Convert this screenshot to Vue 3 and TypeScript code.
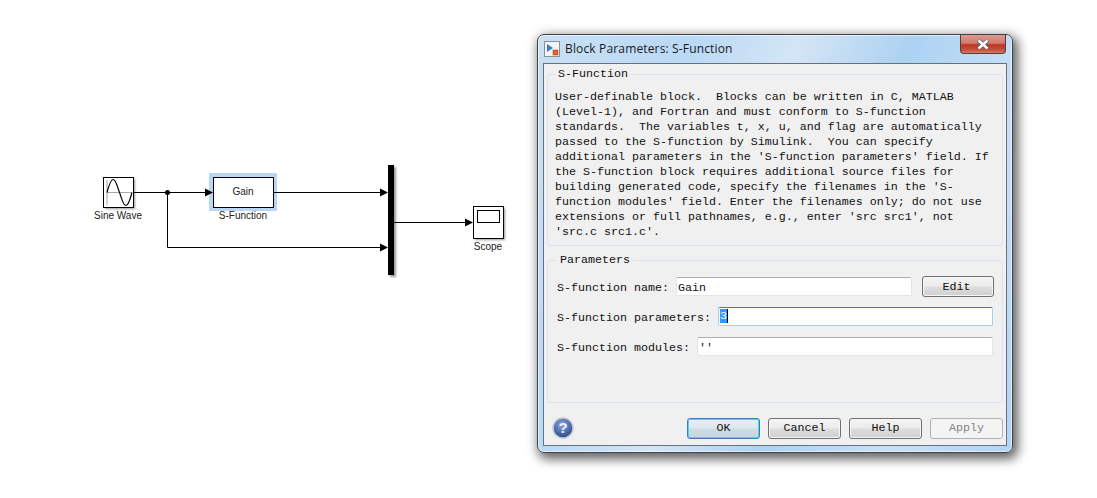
<script setup lang="ts">
const description: string[] = [
  "User-definable block.  Blocks can be written in C, MATLAB",
  "(Level-1), and Fortran and must conform to S-function",
  "standards.  The variables t, x, u, and flag are automatically",
  "passed to the S-function by Simulink.  You can specify",
  "additional parameters in the 'S-function parameters' field. If",
  "the S-function block requires additional source files for",
  "building generated code, specify the filenames in the 'S-",
  "function modules' field. Enter the filenames only; do not use",
  "extensions or full pathnames, e.g., enter 'src src1', not",
  "'src.c src1.c'.",
];
</script>

<template>
  <div class="stage">
    <svg class="diagram" width="530" height="498" viewBox="0 0 530 498">
      <defs>
        <filter id="soft" x="-30%" y="-30%" width="170%" height="170%">
          <feGaussianBlur stdDeviation="1.2" />
        </filter>
      </defs>
      <!-- shadows -->
      <g fill="#000" opacity="0.4" filter="url(#soft)">
        <rect x="105" y="179" width="30" height="30" />
        <rect x="475" y="208" width="30" height="32" />
        <rect x="390" y="167" width="6" height="110" />
      </g>
      <!-- selection halo -->
      <rect x="209" y="173" width="68" height="38" fill="#b9d6f7" />
      <!-- wires -->
      <g fill="none" stroke="#000" stroke-width="1">
        <path d="M133 192.500H206" />
        <path d="M167.500 192.500V247.500H382" />
        <path d="M273 192.500H382" />
        <path d="M394 222.500H466" />
      </g>
      <circle cx="167.500" cy="192.500" r="2.500" fill="#000" />
      <g fill="#000">
        <path d="M205 188.500L213 192.500L205 196.500Z" />
        <path d="M380 188.500L388 192.500L380 196.500Z" />
        <path d="M380 243.500L388 247.500L380 251.500Z" />
        <path d="M465 218.500L473 222.500L465 226.500Z" />
      </g>
      <!-- sine wave -->
      <rect x="103.500" y="177.500" width="30" height="30" fill="#fff" stroke="#000" />
      <path d="M107 180V205M107 192.500H132" fill="none" stroke="#a8a8a8" />
      <path d="M107 192.500C109 185 111 179.500 113 179.500C116 179.500 117 186 119.500 192.500C122 199 123 205.500 126 205.500C128 205.500 130 200 132 192.500" fill="none" stroke="#000" stroke-width="1.200" />
      <!-- s-function -->
      <rect x="213.500" y="177.500" width="60" height="30" fill="#fff" stroke="#000" />
      <!-- bus -->
      <rect x="388" y="165" width="6" height="110" fill="#000" />
      <!-- scope -->
      <rect x="473.500" y="206.500" width="30" height="32" fill="#fff" stroke="#000" />
      <rect x="477.500" y="210.500" width="22" height="12" fill="#fff" stroke="#000" />
      <g class="label">
        <text x="118" y="219">Sine Wave</text>
        <text x="243" y="195">Gain</text>
        <text x="243" y="219">S-Function</text>
        <text x="488" y="250">Scope</text>
      </g>
    </svg>

    <section class="window">
      <header class="titlebar">
        <svg class="app-icon" width="16" height="16" viewBox="0 0 16 16">
          <rect x="0.500" y="0.500" width="15" height="15" fill="#f4f4f4" stroke="#8a8f96" />
          <path d="M3 3L9 7L3 11Z" fill="#2f7fc8" />
          <rect x="9" y="9" width="5" height="5" fill="#e8602a" stroke="#a83a10" stroke-width="0.500" />
        </svg>
        <span class="title">Block Parameters: S-Function</span>
        <div class="close">
          <svg width="14" height="11" viewBox="0 0 14 11">
            <path d="M2 1.500L12 9.500M12 1.500L2 9.500" stroke="#55606a" stroke-width="4" />
            <path d="M2.500 1.500L11.500 9.500M11.500 1.500L2.500 9.500" stroke="#fff" stroke-width="2.400" />
          </svg>
        </div>
      </header>

      <div class="panel">
        <fieldset class="group first">
          <legend>S-Function</legend>
          <p v-for="line in description" :key="line" class="desc">{{ line }}</p>
        </fieldset>

        <fieldset class="group second">
          <legend>Parameters</legend>
          <div class="row">
            <span class="lab">S-function name:</span>
            <div class="field">Gain</div>
            <button class="btn edit" type="button">Edit</button>
          </div>
          <div class="row">
            <span class="lab">S-function parameters:</span>
            <div class="field focused"><span class="sel">3</span></div>
          </div>
          <div class="row">
            <span class="lab">S-function modules:</span>
            <div class="field">''</div>
          </div>
        </fieldset>

        <footer class="footer">
          <div class="help-icon">
            <svg width="22" height="22" viewBox="0 0 22 22">
              <defs>
                <radialGradient id="orb" cx="45%" cy="35%" r="70%">
                  <stop offset="0" stop-color="#8ea8dc" />
                  <stop offset="0.600" stop-color="#4a68ac" />
                  <stop offset="1" stop-color="#2b4382" />
                </radialGradient>
              </defs>
              <circle cx="11" cy="11" r="10" fill="url(#orb)" stroke="#c3c6cc" stroke-width="1.500" />
              <text x="11" y="16" class="q">?</text>
            </svg>
          </div>
          <div class="actions">
            <button class="btn default" type="button">OK</button>
            <button class="btn" type="button">Cancel</button>
            <button class="btn" type="button">Help</button>
            <button class="btn disabled" type="button">Apply</button>
          </div>
        </footer>
      </div>
    </section>
  </div>
</template>

<style>
html,
body {
  margin: 0;
  background: #fff;
}
</style>

<style scoped>
.stage {
  position: relative;
  width: 1097px;
  height: 498px;
  overflow: hidden;
  background: #fff;
}
.diagram {
  position: absolute;
  left: 0;
  top: 0;
}
.label text {
  font-family: "Liberation Sans", Arial, sans-serif;
  font-size: 10px;
  text-anchor: middle;
  fill: #222;
}
.window {
  position: absolute;
  left: 537px;
  top: 34px;
  width: 476px;
  height: 419px;
  box-sizing: border-box;
  border: 1px solid #3f4246;
  border-radius: 7px;
  padding: 0 5px 6px;
  display: flex;
  flex-direction: column;
  background: linear-gradient(110deg, #c9e0f4 0%, #b9d9f6 25%, #d4e5f5 42%, #acd2f2 60%, #c8e0f6 80%, #b2d4f3 100%);
  box-shadow: 3px 4px 11px 2px rgba(0, 0, 0, 0.62), inset 0 0 0 1px rgba(255, 255, 255, 0.6);
}
.titlebar {
  height: 28px;
  flex: none;
  display: flex;
  align-items: center;
  padding-left: 1px;
  gap: 5px;
  position: relative;
}
.title {
  font-family: "Open Sans", "Noto Sans", sans-serif;
  font-size: 12px;
  letter-spacing: 0.15px;
  color: #1a1a1a;
  padding-bottom: 1px;
}
.close {
  position: absolute;
  right: 1px;
  top: 0;
  width: 46px;
  height: 19px;
  box-sizing: border-box;
  border: 1px solid #5b3c3c;
  border-top: none;
  border-radius: 0 0 4px 4px;
  background: linear-gradient(#dc9a8e 0%, #d37a6e 45%, #bb3522 55%, #c9543e 85%, #d07e6c 100%);
  display: flex;
  align-items: center;
  justify-content: center;
}
.panel {
  flex: 1;
  min-height: 0;
  border: 1px solid #66717d;
  background: #f0f0f0;
  display: flex;
  flex-direction: column;
  padding: 3px 3px 0;
  font-family: "Liberation Mono", "DejaVu Sans Mono", monospace;
  font-size: 11.67px;
  color: #111;
}
.group {
  margin: 0;
  min-width: 0;
  box-sizing: border-box;
  border: 1px solid #dae4ee;
  border-radius: 3px;
  flex: none;
}
.group legend {
  margin-left: 0;
  padding: 0 3px;
  line-height: 14px;
  font-size: 11.67px;
}
.first {
  height: 179px;
  padding: 9px 0 0 7px;
}
.second {
  height: 150px;
  margin-top: 7px;
  padding: 10px 9px 0 9px;
  display: flex;
  flex-direction: column;
  gap: 11px;
}
.desc {
  margin: 0;
  height: 15px;
  line-height: 15px;
  white-space: pre;
}
.row {
  display: flex;
  align-items: center;
  gap: 7px;
  height: 19px;
}
.lab {
  white-space: pre;
  flex: none;
  padding-top: 3px;
}
.field {
  flex: 1;
  min-width: 0;
  height: 19px;
  box-sizing: border-box;
  background: #fff;
  border: 1px solid #e3e5ea;
  border-top-color: #acaeb3;
  border-radius: 2px;
  padding-left: 1px;
  line-height: 20px;
}
.field.focused {
  border-color: #a8cde6;
  border-top-color: #3d7bad;
  line-height: 17px;
}
.sel {
  display: inline-block;
  height: 14px;
  line-height: 14px;
  width: 7px;
  background: #3399ff;
  color: #fff;
  border-right: 1px solid #000;
  vertical-align: middle;
}
.btn {
  width: 73px;
  height: 21px;
  flex: none;
  box-sizing: border-box;
  padding: 0;
  font: inherit;
  color: #111;
  border: 1px solid #707070;
  border-radius: 3px;
  background: linear-gradient(#f3f3f3 0%, #ececec 45%, #dcdcdc 55%, #cfcfcf 100%);
  box-shadow: inset 0 0 0 1px #f6f6f6;
}
.edit {
  margin-left: 3px;
  width: 72px;
  margin-right: -1px;
  padding-right: 3px;
}
.default {
  border-color: #3c7fb1;
  background: linear-gradient(#e6f0f4 0%, #dde9ee 45%, #cddbe2 55%, #c6d4db 100%);
  box-shadow: inset 0 0 0 1px #45d6f0;
}
.disabled {
  border-color: #adb2b5;
  color: #838383;
  background: #f4f4f4;
  box-shadow: none;
}
.footer {
  flex: 1;
  display: flex;
  align-items: center;
  justify-content: space-between;
  padding: 8px 0 0 5px;
}
.help-icon {
  display: flex;
}
.q {
  font-family: "Liberation Sans", Arial, sans-serif;
  font-weight: 700;
  font-size: 15px;
  text-anchor: middle;
  fill: #f2f4fa;
}
.actions {
  display: flex;
  gap: 8px;
}
</style>
